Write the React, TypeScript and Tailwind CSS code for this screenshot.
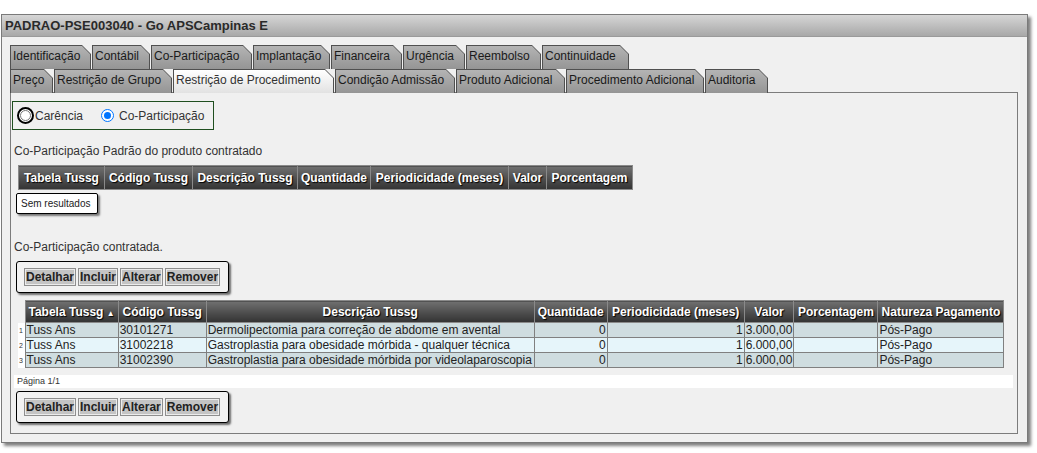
import React from "react";

function Tab({ label, w, active }: { label: string; w: number; active?: boolean }) {
  return (
    <div
      style={{ width: w }}
      className="h-[24px] shrink-0 bg-[#505050] p-[1px] pb-0 [clip-path:polygon(0_0,calc(100%_-_9px)_0,100%_9px,100%_100%,0_100%)]"
    >
      <div
        className={
          "h-full pl-[2px] text-[12px] leading-[21px] whitespace-nowrap [clip-path:polygon(0_0,calc(100%_-_8px)_0,100%_8px,100%_100%,0_100%)] " +
          (active
            ? "bg-gradient-to-b from-[#ffffff] to-[#e2e2e2] text-[#333]"
            : "bg-gradient-to-b from-[#b4b4b4] to-[#959595] text-[#1a1a1a]")
        }
      >
        {label}
      </div>
    </div>
  );
}

const row1: [string, number][] = [
  ["Identificação", 81],
  ["Contábil", 58],
  ["Co-Participação", 101],
  ["Implantação", 77],
  ["Financeira", 71],
  ["Urgência", 62],
  ["Reembolso", 75],
  ["Continuidade", 87],
];

const row2: [string, number][] = [
  ["Preço", 43],
  ["Restrição de Grupo", 118],
  ["Restrição de Procedimento", 161],
  ["Condição Admissão", 120],
  ["Produto Adicional", 109],
  ["Procedimento Adicional", 138],
  ["Auditoria", 63],
];

function Buttons() {
  return (
    <div className="flex w-[213px] gap-[2px] rounded-[3px] border-[1.5px] border-black bg-[#f2f2f2] px-[7px] py-[6px] shadow-[2px_2px_2px_rgba(0,0,0,0.55)]">
      {["Detalhar", "Incluir", "Alterar", "Remover"].map((b) => (
        <button
          key={b}
          type="button"
          className="h-[18px] border border-[#8e8e8e] bg-[#c4c4c4] px-[1px] text-[12px] leading-[14px] font-bold text-[#222] shadow-[inset_0_0_0_1px_#ececec]"
        >
          {b}
        </button>
      ))}
    </div>
  );
}

const headCls =
  "border border-[#8a8a8a] bg-gradient-to-b from-[#707070] to-[#333333] px-[3px] text-[12px] font-bold text-white whitespace-nowrap [text-shadow:1px_1px_1px_#000]";

const rows = [
  ["Tuss Ans", "30101271", "Dermolipectomia para correção de abdome em avental", "0", "1", "3.000,00", "", "Pós-Pago"],
  ["Tuss Ans", "31002218", "Gastroplastia para obesidade mórbida - qualquer técnica", "0", "1", "6.000,00", "", "Pós-Pago"],
  ["Tuss Ans", "31002390", "Gastroplastia para obesidade mórbida por videolaparoscopia", "0", "1", "6.000,00", "", "Pós-Pago"],
];

export default function App() {
  return (
    <div className="h-[453px] w-[1037px] bg-white pt-[14px] pl-[1px] font-['Liberation_Sans',Arial,sans-serif] text-[#222]">
      <div className="w-[1027px] border border-[#7a7a7a] bg-[#f0f0f0] shadow-[3px_3px_3px_rgba(0,0,0,0.5)]">
        <div className="h-[22px] border-b border-[#9a9a9a] bg-gradient-to-b from-[#d6d6d6] to-[#a8a8a8] px-[3px] text-[13px] leading-[22px] font-bold text-[#2a2a2a]">
          PADRAO-PSE003040 - Go APSCampinas E
        </div>
        <div className="pt-[8px] pr-[9px] pb-[8px] pl-[8px]">
          <div className="flex gap-[1px]">
            {row1.map(([l, w]) => (
              <Tab key={l} label={l} w={w} />
            ))}
          </div>
          <div className="flex gap-[1px]">
            {row2.map(([l, w]) => (
              <Tab key={l} label={l} w={w} active={l === "Restrição de Procedimento"} />
            ))}
          </div>
          <div className="-mt-[1px] h-[342px] w-[1008px] border border-[#7c7c7c] bg-[#f0f0f0] pt-[8px] pl-[1px]">
            <div className="flex h-[29px] w-[202px] items-center border border-[#1f4f1f] pl-[4px] text-[12px] text-[#333]">
              <span className="flex h-[17px] w-[17px] items-center justify-center rounded-full border-2 border-black bg-white">
                <span className="h-[11px] w-[11px] rounded-full border border-[#777] bg-white" />
              </span>
              <span className="ml-[1px]">Carência</span>
              <span className="ml-[18px] flex h-[13px] w-[13px] items-center justify-center rounded-full border border-[#0075ff] bg-white">
                <span className="h-[7px] w-[7px] rounded-full bg-[#0075ff]" />
              </span>
              <span className="ml-[5px]">Co-Participação</span>
            </div>

            <div className="mt-[14px] pl-[2px] text-[12px] leading-[14px] text-[#333]">
              Co-Participação Padrão do produto contratado
            </div>

            <table className="mt-[7px] ml-[6px] table-fixed border-collapse">
              <colgroup>
                <col className="w-[86px]" />
                <col className="w-[88px]" />
                <col className="w-[105px]" />
                <col className="w-[73px]" />
                <col className="w-[138px]" />
                <col className="w-[38px]" />
                <col className="w-[86px]" />
              </colgroup>
              <thead>
                <tr className="h-[24px]">
                  {["Tabela Tussg", "Código Tussg", "Descrição Tussg", "Quantidade", "Periodicidade (meses)", "Valor", "Porcentagem"].map((h) => (
                    <th key={h} className={headCls}>
                      {h}
                    </th>
                  ))}
                </tr>
              </thead>
            </table>

            <div className="mt-[3px] ml-[4px] w-[82px] rounded-[2px] border-[1.5px] border-black bg-white py-[4px] pl-[4px] text-[10px] leading-[11px] shadow-[2px_2px_2px_rgba(0,0,0,0.5)]">
              Sem resultados
            </div>

            <div className="mt-[26px] pl-[2px] text-[12px] leading-[14px] text-[#333]">
              Co-Participação contratada.
            </div>

            <div className="mt-[7px] ml-[4px]">
              <Buttons />
            </div>

            <div className="mt-[7px] ml-[2px] w-[999px]">
              <table className="ml-[4px] table-fixed border-collapse text-[12px]">
                <colgroup>
                  <col className="w-[7px]" />
                  <col className="w-[93px]" />
                  <col className="w-[88px]" />
                  <col className="w-[328px]" />
                  <col className="w-[73px]" />
                  <col className="w-[137px]" />
                  <col className="w-[48px]" />
                  <col className="w-[84px]" />
                  <col className="w-[126px]" />
                </colgroup>
                <thead>
                  <tr className="h-[22px]">
                    <th />
                    <th className={headCls}>
                      Tabela Tussg <span className="text-[8px]">▲</span>
                    </th>
                    {["Código Tussg", "Descrição Tussg", "Quantidade", "Periodicidade (meses)", "Valor", "Porcentagem", "Natureza Pagamento"].map((h) => (
                      <th key={h} className={headCls}>
                        {h}
                      </th>
                    ))}
                  </tr>
                </thead>
                <tbody>
                  {rows.map((r, i) => (
                    <tr key={i} className={"h-[15px] leading-[13px] " + (i % 2 ? "bg-[#e6f5fa]" : "bg-[#cfdde0]")}>
                      <td className="bg-white pl-[1px] text-[7px] leading-[13px] text-[#333]">{i + 1}</td>
                      {r.map((c, j) => (
                        <td
                          key={j}
                          className={
                            "overflow-hidden border border-[#808080] px-[1px] whitespace-nowrap " +
                            (j === 3 || j === 4 ? "text-right" : "text-left")
                          }
                        >
                          {c}
                        </td>
                      ))}
                    </tr>
                  ))}
                </tbody>
              </table>
              <div className="mt-[7px] h-[13px] bg-white pl-[3px] text-[9px] leading-[13px] text-[#333]">
                Página 1/1
              </div>
            </div>

            <div className="mt-[3px] ml-[4px]">
              <Buttons />
            </div>
          </div>
        </div>
      </div>
    </div>
  );
}
